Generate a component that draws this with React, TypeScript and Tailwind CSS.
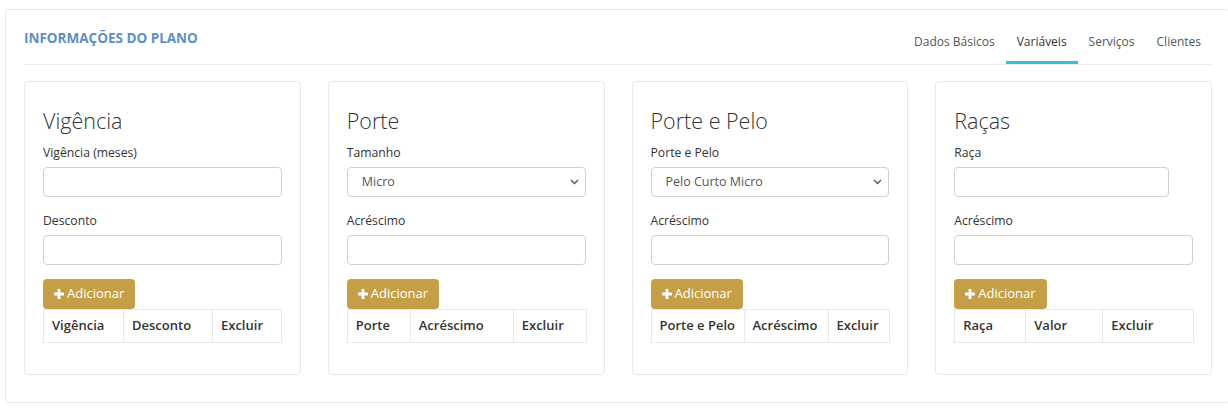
import type { ReactNode } from "react";

const TABS = ["Dados Básicos", "Variáveis", "Serviços", "Clientes"];
const ACTIVE_TAB = "Variáveis";

type Column = { label: string; width: string };

// Chunky "plus" glyph used on the add buttons.
function PlusIcon() {
  return (
    <svg width="10" height="10" viewBox="0 0 10 10" fill="currentColor" className="mr-[3px]">
      <rect x="3.6" y="0" width="2.8" height="10" rx="0.6" />
      <rect x="0" y="3.6" width="10" height="2.8" rx="0.6" />
    </svg>
  );
}

function Label({ children }: { children: ReactNode }) {
  return <label className="mb-[5px] block text-[12.2px] leading-[18px] text-[#333]">{children}</label>;
}

function TextInput({ className = "w-full" }: { className?: string }) {
  return (
    <input
      type="text"
      className={`block h-[30px] rounded-[4px] border border-[#ccd1d9] bg-white px-3 text-[13px] text-[#555] outline-none ${className}`}
    />
  );
}

function Select({ value }: { value: string }) {
  return (
    <div className="relative">
      <select
        defaultValue={value}
        className="block h-[30px] w-full appearance-none rounded-[4px] border border-[#ccd1d9] bg-white pl-[14px] text-[12.5px] text-[#555] outline-none"
      >
        <option>{value}</option>
      </select>
      <svg
        width="9"
        height="6"
        viewBox="0 0 9 6"
        fill="none"
        stroke="#555"
        strokeWidth="1.4"
        className="pointer-events-none absolute right-[7px] top-[12px]"
      >
        <path d="M1 1l3.5 3.5L8 1" />
      </svg>
    </div>
  );
}

function Field({ label, children, last }: { label: string; children: ReactNode; last?: boolean }) {
  return (
    <div className={last ? "mb-[14px]" : "mb-[15px]"}>
      <Label>{label}</Label>
      {children}
    </div>
  );
}

function VariableCard({
  title,
  first,
  second,
  columns,
}: {
  title: string;
  first: { label: string; control: ReactNode };
  second: string;
  columns: Column[];
}) {
  return (
    <div className="rounded-[4px] border border-[#e6e9ee] bg-white px-[18px] pb-[31px] pt-[26px]">
      <h3 className="mb-[10px] text-[21.5px] font-light leading-[26px] text-[#333]">{title}</h3>
      <Field label={first.label}>{first.control}</Field>
      <Field label={second} last>
        <TextInput />
      </Field>
      <button
        type="button"
        className="flex h-[30px] items-center rounded-[4px] bg-[#c49f47] px-[11px] text-[13px] text-white"
      >
        <PlusIcon />
        Adicionar
      </button>
      <table className="w-full table-fixed border-collapse">
        <thead>
          <tr>
            {columns.map((c) => (
              <th
                key={c.label}
                className={`h-[33px] border border-[#e6e9ee] px-2 text-left text-[13px] font-semibold text-[#333] ${c.width}`}
              >
                {c.label}
              </th>
            ))}
          </tr>
        </thead>
      </table>
    </div>
  );
}

export default function App() {
  return (
    <div className="h-[419px] w-[1228px] overflow-hidden bg-white pt-[9px] font-['Open_Sans',sans-serif]">
      <section className="ml-[5px] w-[1226px] rounded-[4px] border border-[#e7e9ec] px-[18px] pb-[27px]">
        {/* Panel header: title on the left, tab strip on the right */}
        <header className="flex items-start justify-between border-b border-[#e8edf3] pt-[18px]">
          <h2 className="text-[13.5px] font-bold uppercase leading-[20px] text-[#5b8fc6]">Informações do Plano</h2>
          <nav className="flex pt-[5px]">
            {TABS.map((t) => (
              <span
                key={t}
                className={`border-b-[3px] px-[11px] pb-[10px] text-[12px] leading-[18px] ${
                  t === ACTIVE_TAB ? "border-[#3bbfcf] text-[#333]" : "border-transparent text-[#555]"
                }`}
              >
                {t}
              </span>
            ))}
          </nav>
        </header>

        <div className="mt-4 grid grid-cols-4 gap-[27px]">
          <VariableCard
            title="Vigência"
            first={{ label: "Vigência (meses)", control: <TextInput /> }}
            second="Desconto"
            columns={[
              { label: "Vigência", width: "w-[80px]" },
              { label: "Desconto", width: "w-[89px]" },
              { label: "Excluir", width: "w-[69px]" },
            ]}
          />
          <VariableCard
            title="Porte"
            first={{ label: "Tamanho", control: <Select value="Micro" /> }}
            second="Acréscimo"
            columns={[
              { label: "Porte", width: "w-[63px]" },
              { label: "Acréscimo", width: "w-[103px]" },
              { label: "Excluir", width: "w-[73px]" },
            ]}
          />
          <VariableCard
            title="Porte e Pelo"
            first={{ label: "Porte e Pelo", control: <Select value="Pelo Curto Micro" /> }}
            second="Acréscimo"
            columns={[
              { label: "Porte e Pelo", width: "w-[93px]" },
              { label: "Acréscimo", width: "w-[84px]" },
              { label: "Excluir", width: "w-[61px]" },
            ]}
          />
          <VariableCard
            title="Raças"
            first={{ label: "Raça", control: <TextInput className="w-[90%]" /> }}
            second="Acréscimo"
            columns={[
              { label: "Raça", width: "w-[71px]" },
              { label: "Valor", width: "w-[77px]" },
              { label: "Excluir", width: "w-[91px]" },
            ]}
          />
        </div>
      </section>
    </div>
  );
}
